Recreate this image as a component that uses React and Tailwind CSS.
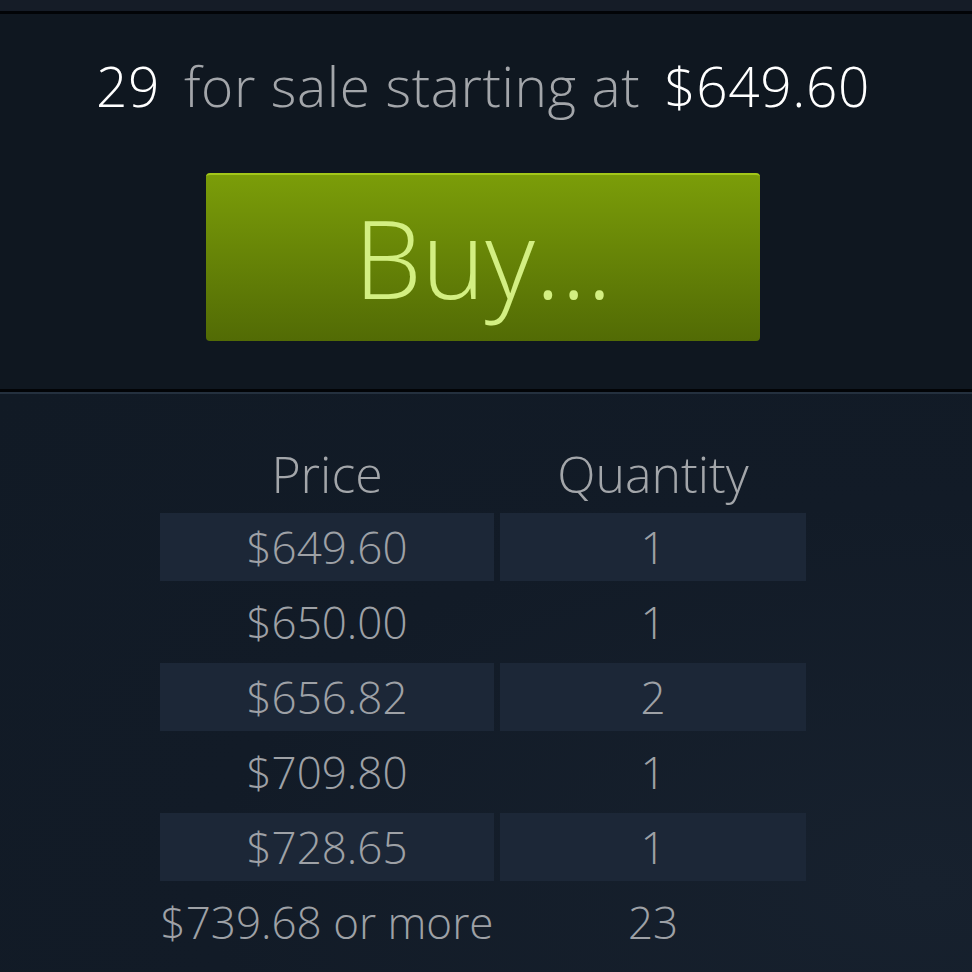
export default function App() {
  const rows = [
    ["$649.60", "1"],
    ["$650.00", "1"],
    ["$656.82", "2"],
    ["$709.80", "1"],
    ["$728.65", "1"],
    ["$739.68 or more", "23"],
  ];
  return (
    <div
      className="w-[972px] h-[972px] overflow-hidden flex flex-col bg-[#111923]"
      style={{ fontFamily: '"Open Sans", "Noto Sans", sans-serif' }}
    >
      <div className="h-[11px] bg-[#151c27] shrink-0" />
      <div className="h-[3px] bg-[#020407] shrink-0" />
      <div className="h-[375px] shrink-0 bg-[#0f1720] flex flex-col items-center">
        <div className="mt-[36px] h-[70px] flex items-center text-[55px] font-light leading-none tracking-[0.6px] -ml-[6px]">
          <span className="text-white">29</span>
          <span className="text-[#a3a6aa] ml-[24px]">for sale starting at</span>
          <span className="text-white ml-[24px]">$649.60</span>
        </div>
        <div className="mt-[53px] -ml-[6px] w-[554px] h-[168px] rounded-[4px] border-t-2 border-[#a3c81a] bg-gradient-to-b from-[#7b9d09] to-[#526b05] flex items-center justify-center">
          <span className="text-[#d3ef82] text-[108px] font-light leading-none -mt-[1px]">Buy...</span>
        </div>
      </div>
      <div className="h-[3px] bg-[#020407] shrink-0" />
      <div className="h-[2px] bg-[#24303e] shrink-0" />
      <div className="flex-1 bg-[radial-gradient(ellipse_at_95%_85%,#17212e_0%,#121b27_55%,#111a25_100%)] flex justify-center">
        <div className="mt-[51px] -ml-[6px] flex flex-col">
          <div className="flex h-[57px] items-center text-[#a3a6aa] text-[50px] font-light leading-none">
            <div className="w-[334px] text-center">Price</div>
            <div className="w-[306px] ml-[6px] text-center">Quantity</div>
          </div>
          <div className="flex flex-col gap-[7px] mt-[11px]">
            {rows.map((r, i) => (
              <div key={i} className="flex h-[68px] text-[#9ea1a6] text-[44px] font-light leading-none">
                <div className={"w-[334px] flex items-center justify-center whitespace-nowrap " + (i % 2 === 0 ? "bg-[#1c2737]" : "")}>
                  {r[0]}
                </div>
                <div className={"w-[306px] ml-[6px] flex items-center justify-center " + (i % 2 === 0 ? "bg-[#1c2737]" : "")}>
                  {r[1]}
                </div>
              </div>
            ))}
          </div>
        </div>
      </div>
    </div>
  );
}
